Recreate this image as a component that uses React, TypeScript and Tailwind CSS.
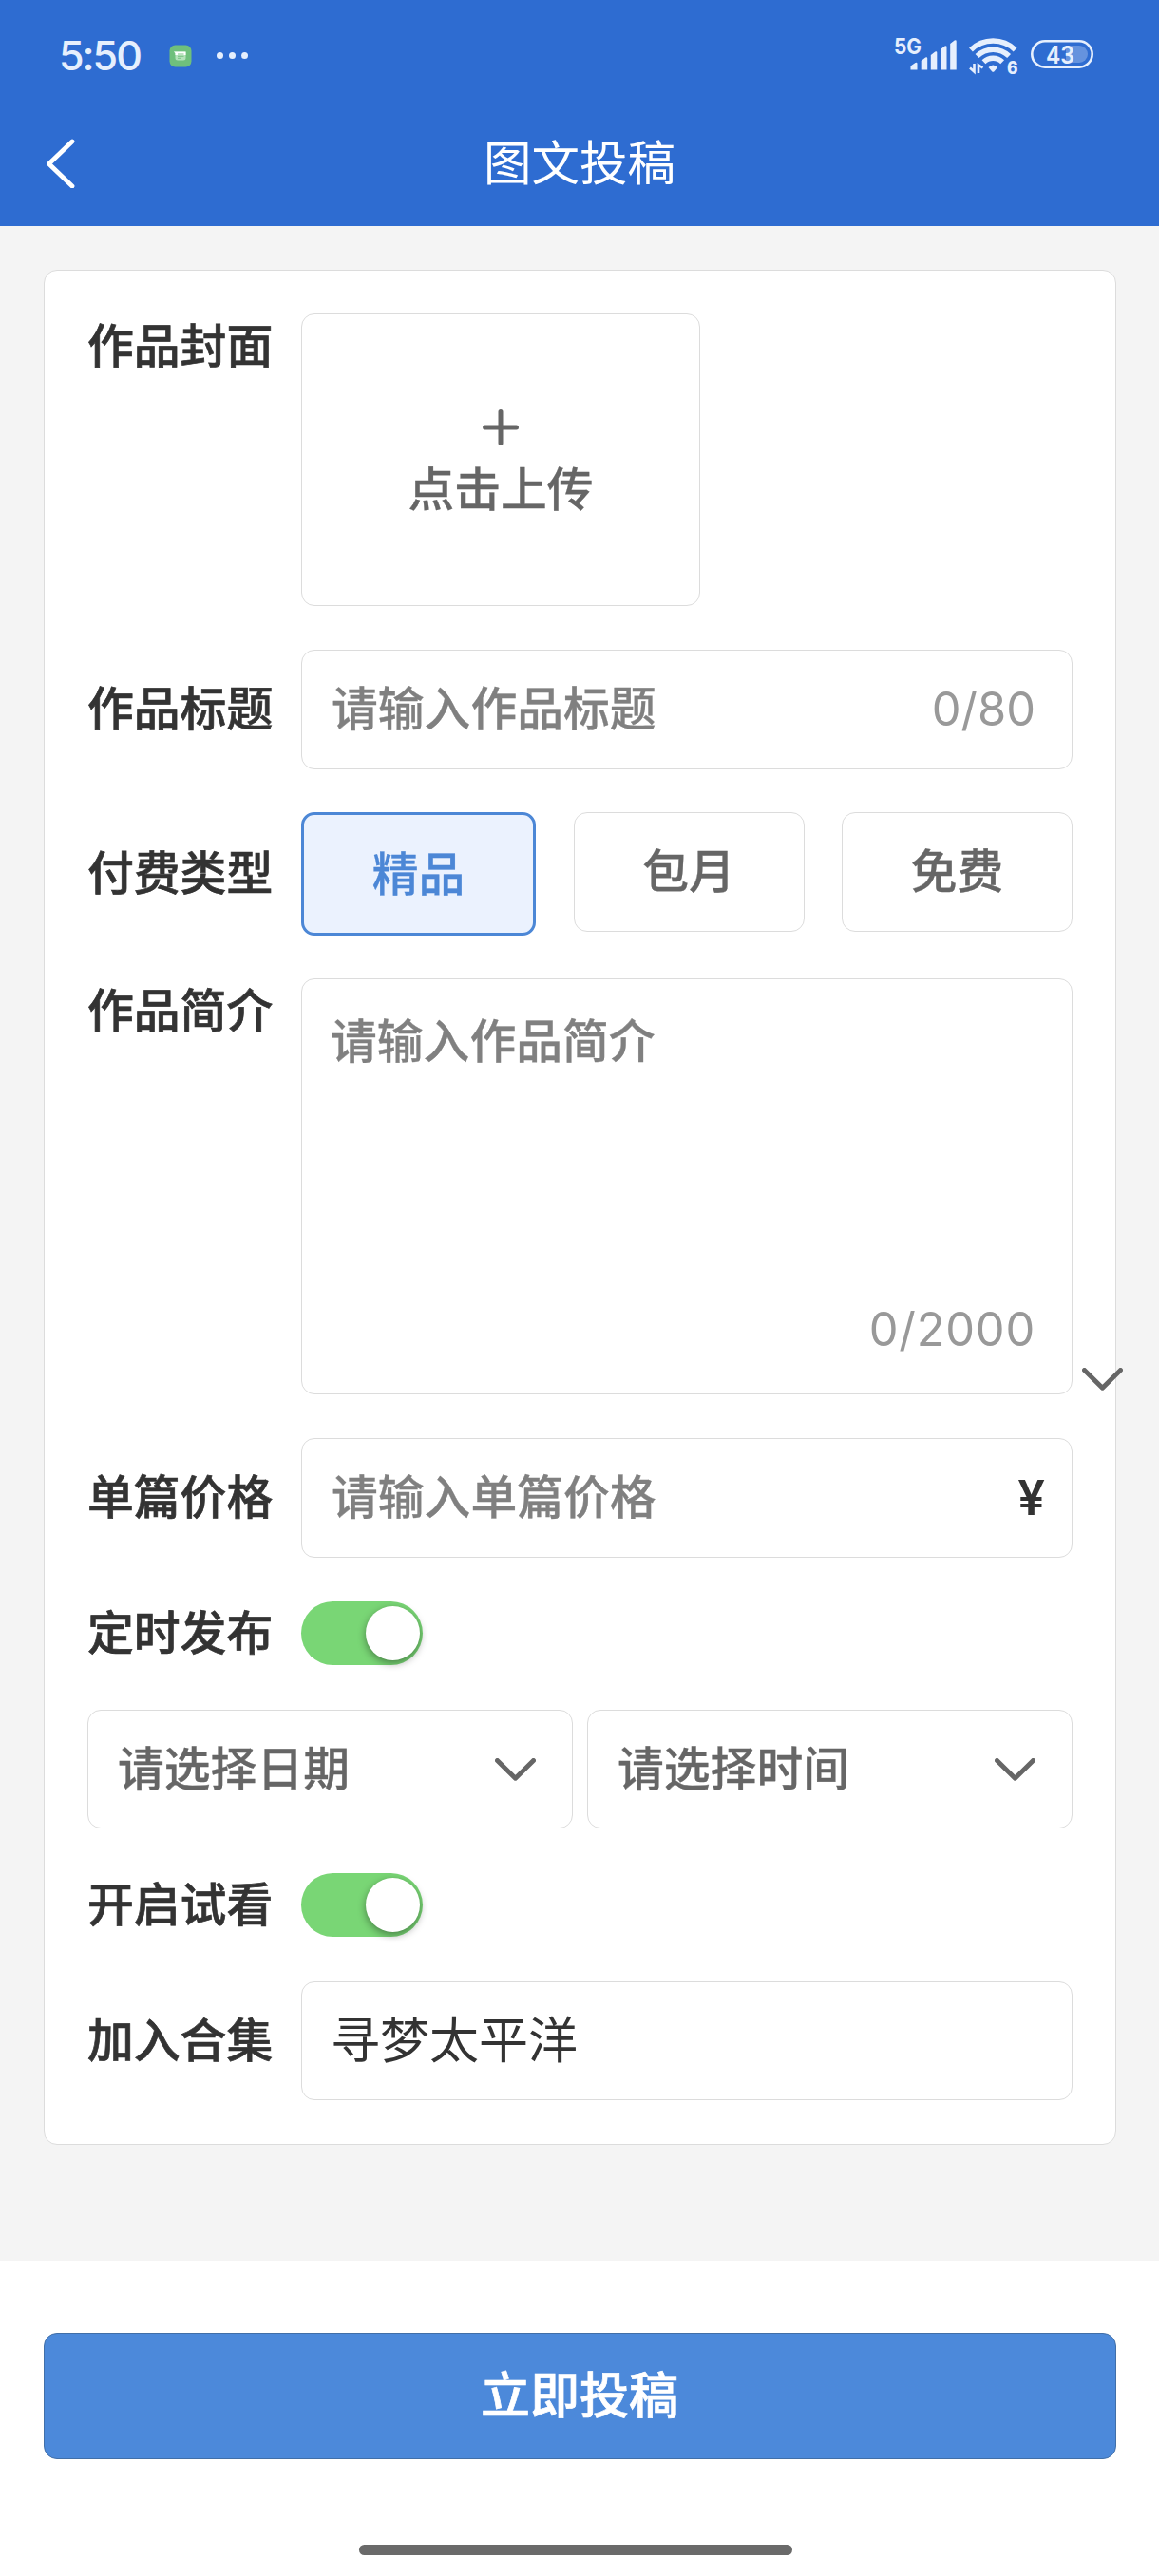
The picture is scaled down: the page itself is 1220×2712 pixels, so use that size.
import { useState, type ReactNode } from "react"
import clsx from "clsx"

const PAY_TYPES = ["精品", "包月", "免费"]

function StatusBar() {
    return (
        <div className="flex h-[104px] items-start justify-between pl-[62px] pr-[69px] text-[#e6effd]">
            <div className="flex h-[117px] items-center">
                <span className="w-[116px] text-[43px] leading-none font-medium tracking-[-2px]">5:50</span>
                <svg className="h-6 w-6" viewBox="0 0 24 24">
                    <rect x="0.5" y="0.5" width="23" height="23" rx="6" fill="#6fc07c" />
                    <path d="M5 7.5h12.500v6.500a2.500 2.500 0 0 1-2.500 2.500H9A2.500 2.500 0 0 1 6.500 14V9z" fill="#b5e3bb" />
                    <path d="M5 7.500h12.500v3.500H6.500V9z" fill="#fff" />
                    <path d="M9 10h6.500M9 12.300h6.500M9 14.300h4" stroke="#6fc07c" strokeWidth="0.9" />
                </svg>
                <div className="ml-[26px] flex gap-[6px]">
                    <i className="size-[7px] rounded-full bg-current" />
                    <i className="size-[7px] rounded-full bg-current" />
                    <i className="size-[7px] rounded-full bg-current" />
                </div>
            </div>

            <svg className="mt-9 h-11 w-[211px]" viewBox="940 36 211 44" fill="currentColor">
                <text x="941" y="56.500" fontSize="23" fontWeight="700" textLength="29" lengthAdjust="spacingAndGlyphs">
                    5G
                </text>
                <path d="M958.500 69.500l5-3.500q2-1 2 1v6.500h-7zM969.700 64l4.500-3.500q2-1 2 1v12h-6.500zM979.800 58l4.500-3.500q2-1 2 1v18h-6.500zM990 52l4.500-3.500q2-1 2 1v24H990zM1000.200 46l4.500-3.500q2-1 2 1v30h-6.500z" />

                <g fill="none" stroke="currentColor" strokeWidth="5.500">
                    <path d="M1022 52.500a33.500 33.500 0 0 1 46.600 0" />
                    <path d="M1028.500 59a24 24 0 0 1 33.600 0" />
                    <path d="M1035.500 65.300a14 14 0 0 1 19.600 0" />
                </g>
                <path d="M1040.500 71q4.800-5 9.600 0l-3.600 4.200q-1.200 1-2.400 0z" />
                <path
                    d="M1025.500 67v8.500l-4.500-4M1030 77v-8.500l4.500 3"
                    fill="none"
                    stroke="currentColor"
                    strokeWidth="2.600"
                />
                <text x="1060" y="77.500" fontSize="18.500" fontWeight="800" textLength="11.500" lengthAdjust="spacingAndGlyphs">
                    6
                </text>

                <path d="M1122 48h14a9 9 0 0 1 0 18h-14z" opacity="0.3" />
                <rect x="1086.300" y="43.300" width="63.400" height="27.400" rx="13.700" fill="none" stroke="currentColor" strokeWidth="2.600" />
                <text x="1101" y="66.700" fontSize="26" fontWeight="600" textLength="30" lengthAdjust="spacingAndGlyphs">
                    43
                </text>
            </svg>
        </div>
    )
}

function ChevronDown({ className }: { className?: string }) {
    return (
        <svg className={clsx("h-6 w-[43px]", className)} viewBox="0 0 43 24" fill="none">
            <path d="M2.500 2.500l19 18.700 19-18.700" stroke="#666" strokeWidth="5" strokeLinecap="round" strokeLinejoin="round" />
        </svg>
    )
}

interface FieldProps {
    label: string
    className?: string
    top?: boolean
    children: ReactNode
}

function Field({ label, className, top, children }: FieldProps) {
    return (
        <div className={clsx("flex", top ? "items-start" : "items-center", className)}>
            <label
                className={clsx(
                    "w-[225px] shrink-0 font-medium text-[#333] [-webkit-text-stroke:0.7px_currentColor]",
                    top ? "leading-[70px]" : "leading-[68px]"
                )}
            >
                {label}
            </label>
            {children}
        </div>
    )
}

function Placeholder({ text }: { text: string }) {
    return <span className="font-medium text-[#808080] [-webkit-text-stroke:0.3px_currentColor]">{text}</span>
}

function Toggle() {
    const [on, setOn] = useState(true)

    return (
        <button
            type="button"
            onClick={() => setOn(!on)}
            className={clsx(
                "flex h-[67px] w-32 items-center rounded-full px-[3px]",
                on ? "justify-end bg-[#79d675]" : "justify-start bg-[#ddd]"
            )}
        >
            <span className="size-[57px] rounded-full bg-white shadow-[0_3px_8px_rgba(0,0,0,0.4)]" />
        </button>
    )
}

function Select({ text }: { text: string }) {
    return (
        <div className="flex h-[125px] w-[511px] items-center justify-between rounded-[14px] border border-[#dcdcdc] pr-[38px] pl-[31px] font-medium text-[#666] [-webkit-text-stroke:0.3px_currentColor]">
            <span>{text}</span>
            <ChevronDown />
        </div>
    )
}

export default function App() {
    const [payType, setPayType] = useState("精品")

    return (
        <div className="flex h-[2712px] w-[1220px] flex-col bg-[#f4f4f4] font-['Inter','Noto_Sans_CJK_SC',sans-serif] text-[48.8px] leading-[68px]">
            <header className="h-[238px] bg-[#2e6cd1]">
                <StatusBar />
                <div className="flex h-[136px] items-center justify-between px-[49px] text-white">
                    <svg className="h-[52px] w-[30px]" viewBox="0 0 30 52" fill="none">
                        <path d="M27 3L2.500 26.500 27 50" stroke="#fff" strokeWidth="4.800" strokeLinecap="round" strokeLinejoin="round" />
                    </svg>
                    <h1 className="text-[50.5px]">图文投稿</h1>
                    <span className="w-[30px]" />
                </div>
            </header>

            <main className="h-[2142px] px-[46px] pt-[46px]">
                <div className="h-[1974px] w-[1129px] rounded-[14px] border border-[#dcdcdc] bg-white px-[45px] pt-[45px]">
                    <Field label="作品封面" top>
                        <div className="flex h-[308px] w-[420px] flex-col items-center rounded-[14px] border border-[#dcdcdc] pt-[100px] text-[#666]">
                            <svg className="h-[38px] w-[38px]" viewBox="0 0 38 38">
                                <path d="M19 2.500v33M2.500 19h33" stroke="#666" strokeWidth="5" strokeLinecap="round" />
                            </svg>
                            <span className="mt-[13px] font-medium [-webkit-text-stroke:0.3px_currentColor]">点击上传</span>
                        </div>
                    </Field>

                    <Field label="作品标题" className="mt-[46px]">
                        <div className="flex h-[126px] w-[812px] items-center justify-between rounded-[14px] border border-[#dcdcdc] pr-[38px] pl-[31px]">
                            <Placeholder text="请输入作品标题" />
                            <span className="text-[#999]">0/80</span>
                        </div>
                    </Field>

                    <Field label="付费类型" className="mt-[45px]">
                        <div className="flex h-[130px] w-[812px] items-start justify-between">
                            {PAY_TYPES.map((type) => (
                                <button
                                    key={type}
                                    type="button"
                                    onClick={() => setPayType(type)}
                                    className={clsx(
                                        "rounded-[14px] font-medium [-webkit-text-stroke:0.3px_currentColor]",
                                        type === payType
                                            ? "h-[130px] w-[247px] border-[3px] border-[#4c87d6] bg-[#ebf2fe] pt-[2px] text-[#4c87d6]"
                                            : "h-[126px] w-[243px] border border-[#dcdcdc] text-[#666]"
                                    )}
                                >
                                    {type}
                                </button>
                            ))}
                        </div>
                    </Field>

                    <Field label="作品简介" className="mt-[45px]" top>
                        <div className="relative flex h-[438px] w-[812px] flex-col justify-between rounded-[14px] border border-[#dcdcdc] pt-[32px] pr-[38px] pb-[33px] pl-[30px]">
                            <Placeholder text="请输入作品简介" />
                            <span className="self-end tracking-[0.8px] text-[#999]">0/2000</span>
                            <ChevronDown className="absolute top-[409px] -right-[54px]" />
                        </div>
                    </Field>

                    <Field label="单篇价格" className="mt-[46px]">
                        <div className="flex h-[126px] w-[812px] items-center justify-between rounded-[14px] border border-[#dcdcdc] pr-[28px] pl-[31px]">
                            <Placeholder text="请输入单篇价格" />
                            <span className="text-[51px] font-semibold text-[#333]">¥</span>
                        </div>
                    </Field>

                    <Field label="定时发布" className="mt-[46px] h-[67px]">
                        <Toggle />
                    </Field>

                    <div className="mt-[47px] flex justify-between">
                        <Select text="请选择日期" />
                        <Select text="请选择时间" />
                    </div>

                    <Field label="开启试看" className="mt-[47px] h-[67px]">
                        <Toggle />
                    </Field>

                    <Field label="加入合集" className="mt-[47px]">
                        <div className="flex h-[125px] w-[812px] items-center rounded-[14px] border border-[#dcdcdc] pl-[30px] text-[52px] text-[#333]">
                            寻梦太平洋
                        </div>
                    </Field>
                </div>
            </main>

            <footer className="flex h-[332px] flex-col items-center bg-white pt-[76px]">
                <button
                    type="button"
                    className="h-[133px] w-[1129px] rounded-[14px] border border-[#416fa8] bg-[#4c89da] text-[52px] font-medium text-white [-webkit-text-stroke:0.7px_currentColor]"
                >
                    立即投稿
                </button>
                <div className="mt-[90px] mr-[8px] h-[11px] w-[456px] rounded-full bg-[#6a6a6a]" />
            </footer>
        </div>
    )
}
